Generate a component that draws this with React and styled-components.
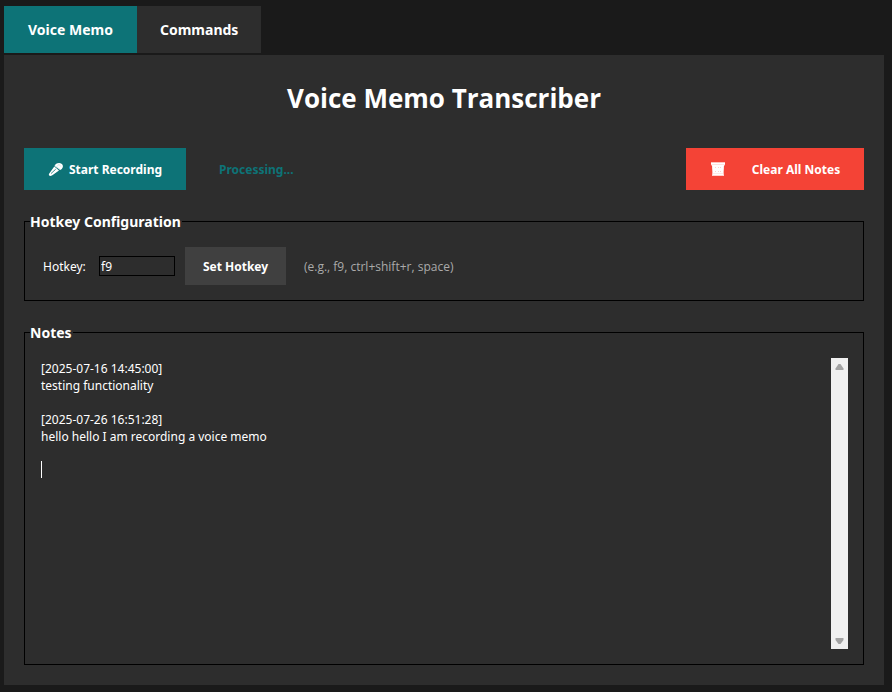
import React, { useState } from "react";
import styled, { createGlobalStyle } from "styled-components";

const GlobalStyle = createGlobalStyle`
  *, *::before, *::after { box-sizing: border-box; }
  body {
    margin: 0;
    background: #1a1a1a;
    color: #ffffff;
    font-family: "Noto Sans", "Open Sans", sans-serif;
    font-size: 12px;
  }
  button, input, textarea { font-family: inherit; }
`;

const Window = styled.div`
  display: flex;
  flex-direction: column;
  gap: 2px;
  min-height: 100vh;
  padding: 6px 8px 7px 4px;
`;

const TabBar = styled.div`
  display: flex;
`;

const Tab = styled.button`
  height: 47px;
  padding: 0 ${(p) => (p.$active ? 24 : 23)}px;
  border: 0;
  background: ${(p) => (p.$active ? "#0d7377" : "#2d2d2d")};
  color: #ffffff;
  font-size: 14px;
  font-weight: 700;
  line-height: 20px;
`;

const Panel = styled.main`
  flex: 1;
  display: flex;
  flex-direction: column;
  padding: 24px 20px 20px;
  background: #2d2d2d;
`;

const Title = styled.h1`
  margin: 0 0 30px;
  font-family: "Open Sans", "Noto Sans", sans-serif;
  font-size: 26px;
  font-weight: 700;
  line-height: 39px;
  text-align: center;
`;

const Toolbar = styled.div`
  display: flex;
  align-items: center;
  margin-bottom: 20px;
`;

const Button = styled.button`
  display: flex;
  align-items: center;
  justify-content: center;
  gap: ${(p) => p.$gap || 0}px;
  min-width: ${(p) => p.$width}px;
  height: ${(p) => (p.$compact ? 38 : 42)}px;
  padding: 0 16px;
  border: 0;
  background: ${(p) => p.$color};
  color: #ffffff;
  font-size: 12px;
  font-weight: 700;
  white-space: nowrap;
`;

const Status = styled.output`
  flex: 1;
  margin-left: 33px;
  color: #0d7377;
  font-size: 12px;
  font-weight: 700;
`;

const Group = styled.fieldset`
  display: flex;
  align-items: center;
  min-width: 0;
  margin: 0;
  padding: 15px;
  border: 1px solid #000000;

  & + & { margin-top: 20px; }
`;

const Legend = styled.legend`
  margin-left: -10px;
  padding: 2px 1px 0 0;
  font-size: 14px;
  font-weight: 700;
  line-height: 20px;
`;

const FieldLabel = styled.label`
  width: 56px;
  margin-left: 3px;
  font-size: 12px;
`;

const HotkeyInput = styled.input`
  width: 76px;
  height: 20px;
  margin-right: 10px;
  padding: 0 1px;
  border: 1px solid #000000;
  border-radius: 0;
  background: #2d2d2d;
  color: #ffffff;
  font-size: 12px;
`;

const Hint = styled.span`
  margin-left: 18px;
  color: #aaaaaa;
  font-family: "Open Sans", "Noto Sans", sans-serif;
  font-size: 12px;
`;

const Editor = styled.div`
  position: relative;
  flex: 1;
  display: flex;
  height: calc(100vh - 401px);
  min-height: 136px;
`;

const NotesText = styled.textarea`
  flex: 1;
  min-width: 0;
  padding: 2px 1px;
  border: 0;
  outline: 0;
  resize: none;
  overflow: hidden;
  background: transparent;
  color: #ffffff;
  font-size: 12px;
  line-height: 17px;
`;

const Caret = styled.span`
  position: absolute;
  top: 103px;
  left: 1px;
  width: 1px;
  height: 17px;
  background: #ffffff;
`;

const ScrollTrack = styled.div`
  display: flex;
  flex-direction: column;
  justify-content: space-between;
  width: 17px;
  background: #f0f0f0;
`;

const ScrollButton = styled.button`
  display: grid;
  place-items: center;
  width: 17px;
  height: 17px;
  padding: 0;
  border: 0;
  background: transparent;
  color: #a3a3a3;
`;

const MicIcon = () => (
  <svg width="16" height="16" viewBox="0 0 16 16" aria-hidden="true">
    <path d="M6.500 5C7.200 2.900 9.300 1.700 11.500 1.900c2.300.2 3.700 1.800 3.400 3.800-.3 1.500-1.300 2.700-2.800 3.300z" fill="#ffffff" />
    <path d="M6.300 5.600 11 9.400 4.300 14.300c-1.200.8-2.500.9-3.100.3-.6-.7-.4-1.700.4-2.700z" fill="#ffffff" />
    <path d="M7.400 8.500 3.300 12.300" stroke="#0d7377" strokeWidth=".8" strokeLinecap="round" />
    <path d="m7.300 4.800 5 3.700M10.500 3.300l2.700 2.200M9 5.300l2.500-2.200" stroke="#a5cbcd" strokeWidth=".4" fill="none" />
  </svg>
);

const BinIcon = () => (
  <svg width="16" height="16" viewBox="0 0 16 16" aria-hidden="true">
    <path d="M1 1h14v3.500H1z" fill="#ffc2bd" />
    <path d="M1 2h14v1.500H1z" fill="#ffffff" />
    <path d="M2 4h12l-.5 10h-11z" fill="#ffffff" />
    <path d="M2 12.500h12v2.500H2z" fill="#ffd2ce" />
    <path d="M3 13h10v1H3z" fill="#ffffff" />
    <path d="M5 6.500h1M8 6.500h1M10 6.500h1M5 10.500h1M8 10.500h1M10 10.500h1" stroke="#fdd0cc" />
  </svg>
);

const Arrow = ({ down }) => (
  <svg width="9" height="6" viewBox="0 0 9 6" fill="currentColor" aria-hidden="true">
    <path d={down ? "M.500 0h8v2L5.500 6h-2L.500 2z" : "M.500 6h8V4.500L5.500 0h-2L.500 4.500z"} />
  </svg>
);

const NOTES = `[2025-07-16 14:45:00]
testing functionality

[2025-07-26 16:51:28]
hello hello I am recording a voice memo

`;

export default function App() {
  const [hotkey, setHotkey] = useState("f9");
  const [notes, setNotes] = useState(NOTES);

  return (
    <>
      <GlobalStyle />
      <Window>
        <TabBar role="tablist">
          <Tab type="button" role="tab" aria-selected="true" $active>Voice Memo</Tab>
          <Tab type="button" role="tab" aria-selected="false">Commands</Tab>
        </TabBar>
        <Panel>
          <Title>Voice Memo Transcriber</Title>
          <Toolbar>
            <Button type="button" $color="#0d7377" $gap={5} $width={162}>
              <MicIcon />
              Start Recording
            </Button>
            <Status>Processing...</Status>
            <Button type="button" $color="#f44336" $gap={26} $width={178} onClick={() => setNotes("")}>
              <BinIcon />
              Clear All Notes
            </Button>
          </Toolbar>
          <Group>
            <Legend>Hotkey Configuration</Legend>
            <FieldLabel htmlFor="hotkey">Hotkey:</FieldLabel>
            <HotkeyInput id="hotkey" value={hotkey} onChange={(e) => setHotkey(e.target.value)} />
            <Button type="button" $color="#404040" $width={101} $compact>Set Hotkey</Button>
            <Hint>(e.g., f9, ctrl+shift+r, space)</Hint>
          </Group>
          <Group>
            <Legend>Notes</Legend>
            <Editor>
              <NotesText aria-label="Notes" value={notes} onChange={(e) => setNotes(e.target.value)} />
              <Caret />
              <ScrollTrack>
                <ScrollButton type="button" aria-label="Scroll up"><Arrow /></ScrollButton>
                <ScrollButton type="button" aria-label="Scroll down"><Arrow down /></ScrollButton>
              </ScrollTrack>
            </Editor>
          </Group>
        </Panel>
      </Window>
    </>
  );
}
